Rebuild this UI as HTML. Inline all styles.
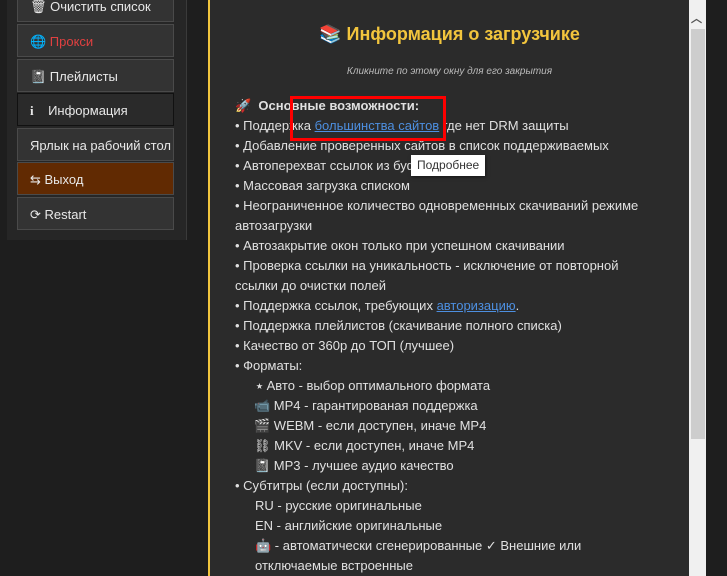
<!DOCTYPE html><html style="width:727px;height:576px;overflow:hidden"><head><meta charset="utf-8"><style>
body{margin:0;width:727px;height:576px;background:#1e1e1e;overflow:hidden;font-family:"Liberation Sans","DejaVu Sans",sans-serif;position:relative}
.panel{position:absolute;left:7px;top:0;width:179px;height:240px;background:#262626;border-right:1px solid #3a3a3a}
.btn{position:absolute;left:17px;width:157px;height:33px;background:#333;border:1px solid #4a4a4a;color:#e8e8e8;font-size:13px;line-height:33px;padding-left:12px;box-sizing:border-box;white-space:nowrap}
.modal{position:absolute;left:208px;top:-2px;width:498px;height:580px;background:#2b2b2b;border-left:2px solid #f2c53d;border-right:2px solid #f2c53d;box-sizing:border-box}
.sb{position:absolute;left:689px;top:0;width:17px;height:576px;background:#f0f0f0}
.thumb{position:absolute;left:691px;top:29px;width:14px;height:410px;background:#cdcdcd}
.l{position:absolute;color:#e0e0e0;font-size:13px;white-space:nowrap;line-height:20px}
a{color:#4d8fe0;text-decoration:underline}
</style></head><body>
<div class="panel"></div>
<div class="btn" style="top:-11px">🗑 Очистить список</div>
<div class="btn" style="top:24px;color:#e04040">🌐 Прокси</div>
<div class="btn" style="top:59px">📓 Плейлисты</div>
<div class="btn" style="top:93px;background:#2a2a2a;border:1px solid #111"><b style="font-family:'Liberation Serif'">i</b>&nbsp;&nbsp;&nbsp; Информация</div>
<div class="btn" style="top:128px">Ярлык на рабочий стол</div>
<div class="btn" style="top:162px;background:#612a02">⇆ Выход</div>
<div class="btn" style="top:197px">⟳ Restart</div>
<div class="modal"></div>
<div class="sb"></div><div class="thumb"></div>
<div style="position:absolute;left:691px;top:10px;color:#555;font-size:11px;font-weight:bold">︿</div>
<div style="position:absolute;left:210px;top:24px;width:479px;text-align:center;color:#f2c53d;font-size:18px;font-weight:bold">📚 Информация о загрузчике</div>
<div style="position:absolute;left:210px;top:66px;width:479px;text-align:center;color:#bbb;font-size:10px;font-style:italic">Кликните по этому окну для его закрытия</div>
<div class="l" style="left:235px;top:96px;font-weight:bold">🚀&nbsp; Основные возможности:</div>
<div class="l" style="left:235px;top:116px">• Поддержка <a>большинства сайтов</a> где нет DRM защиты</div>
<div class="l" style="left:235px;top:136px">• Добавление проверенных сайтов в список поддерживаемых</div>
<div class="l" style="left:235px;top:156px">• Автоперехват ссылок из буфера</div>
<div class="l" style="left:235px;top:176px">• Массовая загрузка списком</div>
<div class="l" style="left:235px;top:196px">• Неограниченное количество одновременных скачиваний режиме</div>
<div class="l" style="left:235px;top:216px">автозагрузки</div>
<div class="l" style="left:235px;top:236px">• Автозакрытие окон только при успешном скачивании</div>
<div class="l" style="left:235px;top:256px">• Проверка ссылки на уникальность - исключение от повторной</div>
<div class="l" style="left:235px;top:276px">ссылки до очистки полей</div>
<div class="l" style="left:235px;top:296px">• Поддержка ссылок, требующих <a>авторизацию</a>.</div>
<div class="l" style="left:235px;top:316px">• Поддержка плейлистов (скачивание полного списка)</div>
<div class="l" style="left:235px;top:336px">• Качество от 360р до ТОП (лучшее)</div>
<div class="l" style="left:235px;top:356px">• Форматы:</div>
<div class="l" style="left:256px;top:376px">⭑ Авто - выбор оптимального формата</div>
<div class="l" style="left:254px;top:396px">📹 MP4 - гарантированая поддержка</div>
<div class="l" style="left:254px;top:416px">🎬 WEBM - если доступен, иначе MP4</div>
<div class="l" style="left:254px;top:436px">⛓ MKV - если доступен, иначе MP4</div>
<div class="l" style="left:254px;top:456px">📓 MP3 - лучшее аудио качество</div>
<div class="l" style="left:235px;top:476px">• Субтитры (если доступны):</div>
<div class="l" style="left:255px;top:496px">RU - русские оригинальные</div>
<div class="l" style="left:255px;top:516px">EN - английские оригинальные</div>
<div class="l" style="left:255px;top:536px">🤖 - автоматически сгенерированные ✓ Внешние или</div>
<div class="l" style="left:255px;top:556px">отключаемые встроенные</div>
<div style="position:absolute;left:290px;top:96px;width:156px;height:45px;border:3px solid #f00;box-sizing:border-box"></div>
<div style="position:absolute;left:411px;top:155px;height:21px;padding:0 6px;background:#fff;color:#333;font-size:12px;line-height:21px;box-shadow:1px 1px 3px rgba(0,0,0,.5)">Подробнее</div>
</body></html>
